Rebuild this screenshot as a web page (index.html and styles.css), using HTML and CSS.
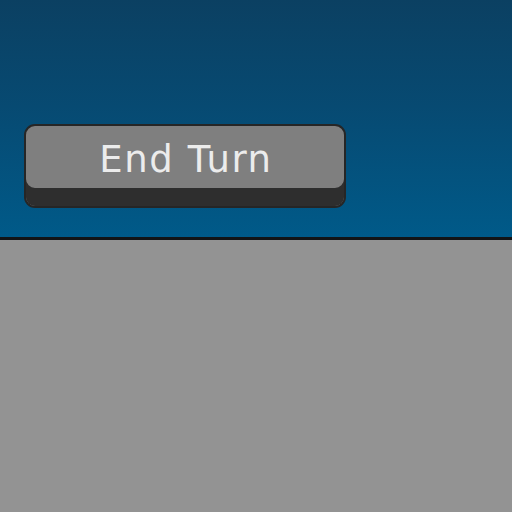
FILE: index.html
```html
<!DOCTYPE html>
<html>
<head>
<meta charset="utf-8">
<link rel="stylesheet" href="styles.css">
</head>
<body>
<div class="sky">
  <button class="end-turn"><span class="label">End Turn</span></button>
</div>
<div class="ground"></div>
</body>
</html>
```

FILE: styles.css
```css
html, body {
  margin: 0;
  padding: 0;
  width: 512px;
  height: 512px;
  overflow: hidden;
  background: #939393;
}
.sky {
  height: 240px;
  background: linear-gradient(to bottom, #0b4062 0%, #074a72 45%, #005a89 100%);
  border-bottom: 3px solid #121416;
  padding: 124px 0 0 24px;
  box-sizing: border-box;
}
.end-turn {
  display: flex;
  align-items: center;
  justify-content: center;
  width: 322px;
  height: 84px;
  box-sizing: border-box;
  border: 2px solid #262626;
  border-radius: 11px;
  background: #7f7f7f;
  box-shadow: inset 0 -18px 0 #2e2e2e;
  padding: 0 0 14px 2px;
  margin: 0;
  cursor: pointer;
}
.label {
  font-family: "DejaVu Sans", sans-serif;
  font-size: 37px;
  color: #ececec;
  letter-spacing: 1.6px;
  line-height: 1;
}
.ground {
  height: 272px;
  background: #939393;
}
```
